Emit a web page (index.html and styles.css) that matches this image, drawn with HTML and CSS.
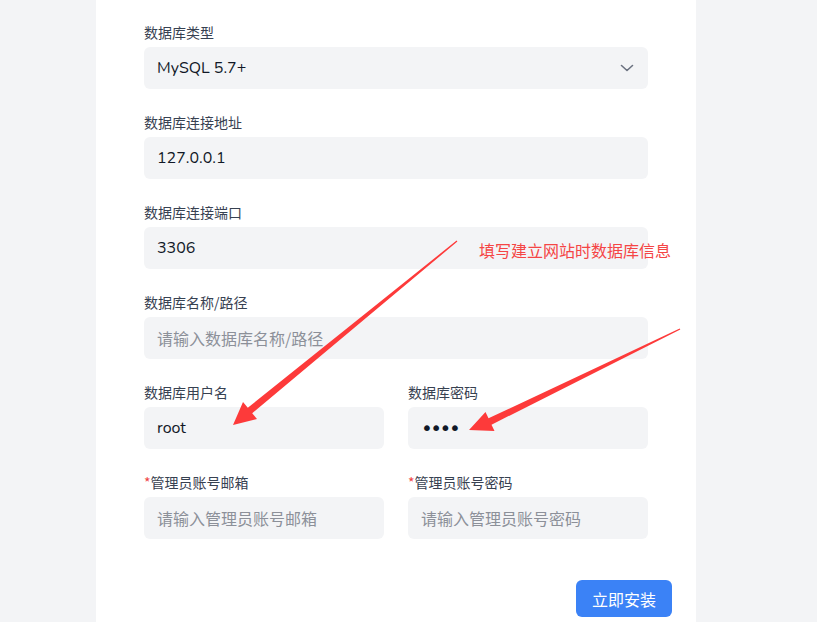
FILE: index.html
```html
<!DOCTYPE html>
<html lang="zh-CN">
<head>
<meta charset="utf-8">
<title>安装</title>
<link rel="stylesheet" href="styles.css">
</head>
<body>
<main class="card">
  <div class="field">
    <label class="label">数据库类型</label>
    <div class="input select">
      <span class="value">MySQL 5.7+</span>
      <svg class="chevron" width="14" height="8" viewBox="0 0 14 8"><path d="M1.5 1.5 L7 6.5 L12.5 1.5" fill="none" stroke="#6b7280" stroke-width="1.6" stroke-linecap="round" stroke-linejoin="round"/></svg>
    </div>
  </div>
  <div class="field">
    <label class="label">数据库连接地址</label>
    <div class="input"><span class="value">127.0.0.1</span></div>
  </div>
  <div class="field">
    <label class="label">数据库连接端口</label>
    <div class="input"><span class="value">3306</span></div>
  </div>
  <div class="field">
    <label class="label">数据库名称/路径</label>
    <div class="input"><span class="placeholder">请输入数据库名称/路径</span></div>
  </div>
  <div class="row">
    <div class="field">
      <label class="label">数据库用户名</label>
      <div class="input"><span class="value">root</span></div>
    </div>
    <div class="field">
      <label class="label">数据库密码</label>
      <div class="input"><span class="dots">••••</span></div>
    </div>
  </div>
  <div class="row">
    <div class="field">
      <label class="label"><span class="req">*</span>管理员账号邮箱</label>
      <div class="input"><span class="placeholder">请输入管理员账号邮箱</span></div>
    </div>
    <div class="field">
      <label class="label"><span class="req">*</span>管理员账号密码</label>
      <div class="input"><span class="placeholder">请输入管理员账号密码</span></div>
    </div>
  </div>
  <div class="footer">
    <button class="btn">立即安装</button>
  </div>
</main>
<div class="note">填写建立网站时数据库信息</div>
<svg class="arrows" width="817" height="622" viewBox="0 0 817 622">
  <polygon fill="#fd3a3a" points="456.6,240.5 247.8,407.8 243,402 233,425 257,419 252.2,413.2 457.4,241.5"/>
  <polygon fill="#fd3a3a" points="679.7,328.5 488.5,418.3 485.5,412 469,430 494.5,431 491.5,424.7 680.3,329.5"/>
</svg>
</body>
</html>
```
FILE: styles.css
```css
html, body {
  margin: 0;
  padding: 0;
  height: 100%;
  overflow: hidden;
}
body {
  background: #f3f4f6;
  font-family: "Nunito", "Noto Sans", "Noto Sans CJK SC", sans-serif;
  color: #111827;
  position: relative;
}
.card {
  width: 600px;
  box-sizing: border-box;
  margin-left: 96px;
  background: #ffffff;
  min-height: 100%;
  padding: 22px 48px 0 48px;
  display: flex;
  flex-direction: column;
  gap: 23px;
}
.field {
  display: flex;
  flex-direction: column;
  gap: 5px;
}
.row {
  display: flex;
  gap: 24px;
}
.row .field {
  flex: 1;
}
.label {
  font-size: 14px;
  line-height: 20px;
  height: 20px;
  color: #374151;
  font-family: "Noto Sans CJK SC", sans-serif;
}
.req {
  color: #ef4444;
}
.input {
  height: 42px;
  background: #f3f4f6;
  border-radius: 6px;
  display: flex;
  align-items: center;
  padding: 0 13px;
  box-sizing: border-box;
  font-size: 16px;
}
.select {
  justify-content: space-between;
  padding-right: 14px;
}
.value {
  color: #111827;
  font-family: "Nunito", "Noto Sans", sans-serif;
}
.placeholder {
  color: #8c9099;
  font-family: "Noto Sans CJK SC", sans-serif;
}
.dots {
  font-size: 20px;
  letter-spacing: -2.5px;
  color: #111827;
  font-family: "DejaVu Sans", sans-serif;
}
.footer {
  display: flex;
  justify-content: flex-end;
  margin-right: -24px;
  margin-top: 18px;
}
.btn {
  width: 96px;
  height: 37px;
  border: none;
  border-radius: 6px;
  background: #3b82f6;
  color: #ffffff;
  font-size: 16px;
  font-family: "Noto Sans CJK SC", sans-serif;
  padding: 0;
}
.note {
  position: absolute;
  left: 479px;
  top: 240px;
  font-size: 16px;
  line-height: 20px;
  color: #f54545;
  font-family: "Noto Sans CJK SC", sans-serif;
}
.arrows {
  position: absolute;
  left: 0;
  top: 0;
  pointer-events: none;
}
```
